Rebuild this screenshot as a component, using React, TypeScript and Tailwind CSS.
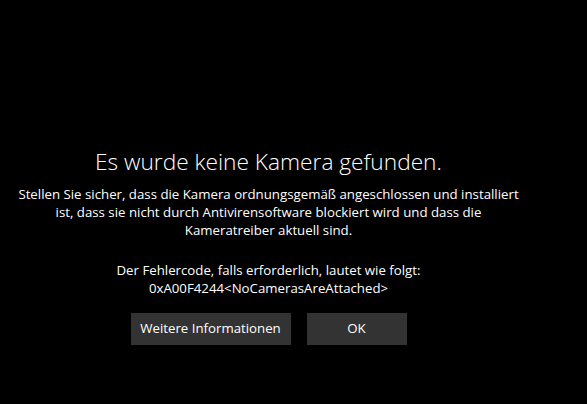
export default function App() {
  return (
    <div className="h-[404px] w-[587px] overflow-hidden bg-black font-['Open_Sans','Noto_Sans',sans-serif] text-white">
      <div className="flex w-[537px] flex-col items-center pt-[146px] text-center">
        <h1 className="text-[22.7px] font-light leading-[32px]">
          Es wurde keine Kamera gefunden.
        </h1>
        <p className="mt-[7px] text-[13.25px] leading-[18px]">
          Stellen Sie sicher, dass die Kamera ordnungsgemäß angeschlossen und installiert
          <br />
          ist, dass sie nicht durch Antivirensoftware blockiert wird und dass die
          <br />
          Kameratreiber aktuell sind.
        </p>
        <p className="mt-[22px] text-[13.25px] leading-[18px]">
          Der Fehlercode, falls erforderlich, lautet wie folgt:
          <br />
          0xA00F4244&lt;NoCamerasAreAttached&gt;
        </p>
        <div className="mt-[16px] flex gap-[16px]">
          <button
            type="button"
            className="h-[32px] w-[160px] bg-[#333333] text-[13.25px] text-white"
          >
            Weitere Informationen
          </button>
          <button
            type="button"
            className="h-[32px] w-[100px] bg-[#333333] text-[13.25px] text-white"
          >
            OK
          </button>
        </div>
      </div>
    </div>
  );
}
